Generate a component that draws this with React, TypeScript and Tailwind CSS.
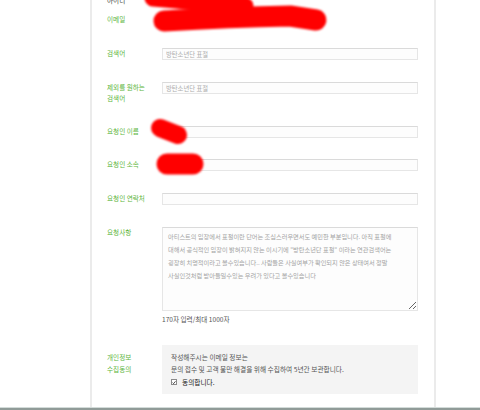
const FONT = "font-['Noto_Sans_CJK_KR','Noto_Sans',sans-serif]";

const labelCls = 'w-[55px] shrink-0 text-[6.6px] leading-[11px] text-[#5db53c]';
const inputCls =
  'w-[256px] h-[12px] border border-[#e6e6e6] border-t-[#dadada] bg-[#fdfdfd] px-[3px] text-[6.3px] text-[#444] outline-none placeholder:text-[#adadad]';

const requestText = [
  '아티스트의 입장에서 표절이란 단어는 조심스러우면서도 예민한 부분입니다. 아직 표절에',
  '대해서 공식적인 입장이 밝혀지지 않는 이시기에 "방탄소년단 표절" 이라는 연관검색어는',
  '굉장히 치명적이라고 볼수있습니다.. 사람들은 사실여부가 확인되지 않은 상태여서 정말',
  '사실인것처럼 받아들일수있는 우려가 있다고 볼수있습니다',
].join('\n');

function Field({ placeholder }: { placeholder?: string }) {
  return <input readOnly placeholder={placeholder} className={inputCls} />;
}

export default function App() {
  return (
    <div className={`relative h-[410px] w-[480px] overflow-hidden bg-white ${FONT}`}>
      <div className="flex h-full flex-col">
        {/* form panel */}
        <div className="ml-[90px] w-[346px] flex-1 overflow-hidden border-x-2 border-[#ebebeb] pl-[15px] pr-[16px]">
          {/* 아이디 (cut off at top, as in the capture) */}
          <div className="-mt-[5px] flex h-[19px] items-start">
            <div className={`${labelCls} !text-[#444]`}>아이디</div>
          </div>

          {/* 이메일 */}
          <div className="flex h-[34px] items-start">
            <div className={labelCls}>이메일</div>
          </div>

          {/* 검색어 */}
          <div className="flex h-[34px] items-start">
            <div className={labelCls}>검색어</div>
            <Field placeholder="방탄소년단 표절" />
          </div>

          {/* 제외 검색어 */}
          <div className="flex h-[44px] items-start">
            <div className={`${labelCls} leading-[11.5px]`}>
              제외를 원하는
              <br />
              검색어
            </div>
            <Field placeholder="방탄소년단 표절" />
          </div>

          <div className="flex h-[33px] items-start">
            <div className={labelCls}>요청인 이름</div>
            <Field />
          </div>

          <div className="flex h-[34px] items-start">
            <div className={labelCls}>요청인 소속</div>
            <Field />
          </div>

          <div className="flex h-[34px] items-start">
            <div className={labelCls}>요청인 연락처</div>
            <Field />
          </div>

          {/* 요청사항 */}
          <div className="flex h-[118px] items-start">
            <div className={labelCls}>요청사항</div>
            <div className="flex flex-col">
              <textarea
                readOnly
                wrap="off"
                value={requestText}
                className="h-[84px] w-[256px] overflow-hidden border border-[#e6e6e6] border-t-[#dadada] bg-[#fdfdfd] px-[5px] pt-[2px] text-[6.2px] leading-[13px] text-[#a3a3a3] outline-none"
              />
              <div className="mt-[3px] text-[6.6px] leading-[11px] text-[#555]">170자 입력/최대 1000자</div>
            </div>
          </div>

          {/* 개인정보 수집동의 */}
          <div className="flex items-start">
            <div className={`${labelCls} mt-[5.5px] leading-[12px]`}>
              개인정보
              <br />
              수집동의
            </div>
            <div className="h-[49px] w-[256px] bg-[#f4f4f4] pl-[9px] pt-[6px] text-[6.7px] leading-[12px] text-[#555]">
              <div>작성해주시는 이메일 정보는</div>
              <div>문의 접수 및 고객 불만 해결을 위해 수집하여 5년간 보관합니다.</div>
              <div className="mt-[1px] flex items-center gap-[5px] text-[#222]">
                <span className="flex h-[6px] w-[6px] items-center justify-center border border-[#8a8a8a] bg-white">
                  <svg viewBox="0 0 10 10" className="h-[5px] w-[5px]">
                    <path d="M1.5 5.2 L4 7.8 L8.8 2" fill="none" stroke="#222" strokeWidth="2" />
                  </svg>
                </span>
                <span>동의합니다.</span>
              </div>
            </div>
          </div>
        </div>

        {/* window frame edge */}
        <div className="h-[3px] shrink-0 border-t border-[#d3dbd9] bg-[#909b98]" />
      </div>

      {/* redaction scribbles */}
      <svg className="pointer-events-none absolute inset-0" width="480" height="410" viewBox="0 0 480 410">
        <defs>
          <filter id="soft" x="-10%" y="-50%" width="120%" height="200%">
            <feGaussianBlur stdDeviation="0.9" />
          </filter>
        </defs>
        <g filter="url(#soft)" stroke="#ff0000" fill="none" strokeLinecap="round" strokeLinejoin="round">
          <path d="M153 -2 Q200 2 245 6" strokeWidth="17" />
          <path d="M164 21 Q230 17 290 16 L316 20" strokeWidth="21" />
          <path d="M160 128 L178 135" strokeWidth="18" />
          <path d="M167 164 L193 164" strokeWidth="21" />
        </g>
      </svg>
    </div>
  );
}
